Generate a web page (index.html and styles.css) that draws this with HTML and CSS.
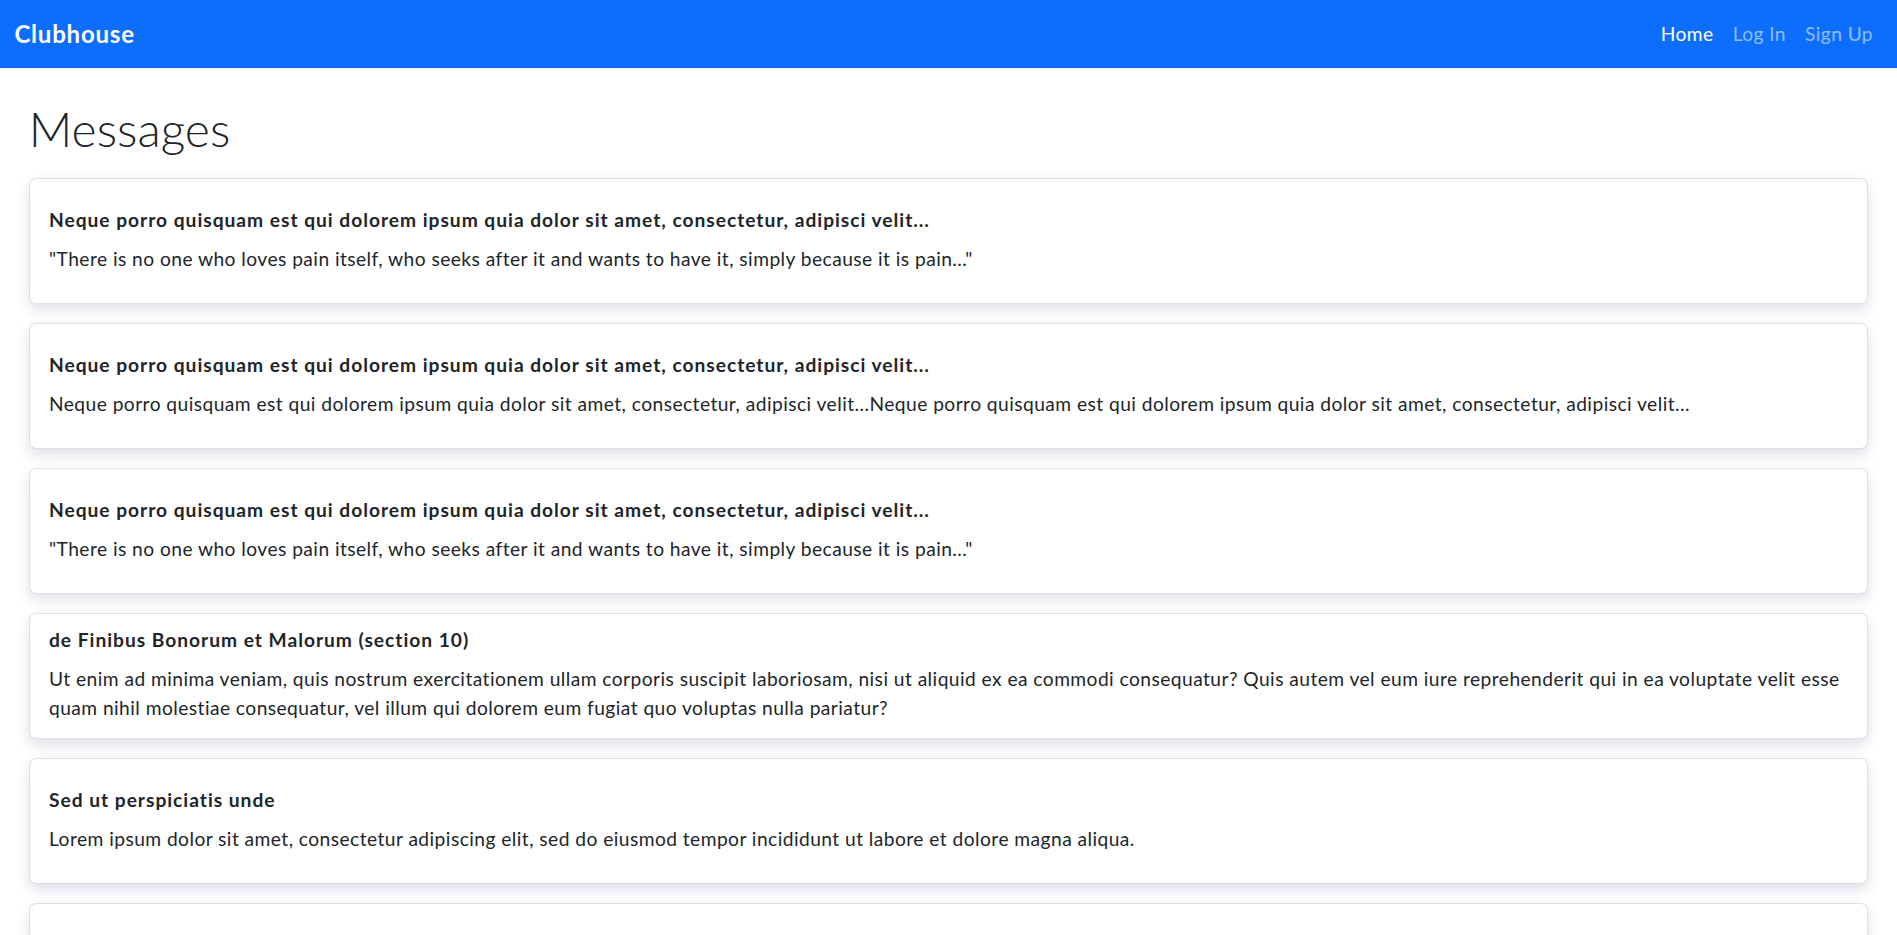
FILE: index.html
```html
<!DOCTYPE html>
<html lang="en">
<head>
<meta charset="utf-8">
<title>Clubhouse</title>
<link rel="stylesheet" href="styles.css">
</head>
<body>
<nav class="navbar">
  <a class="brand" href="#">Clubhouse</a>
  <ul class="nav">
    <li><a class="nav-link active" href="#">Home</a></li>
    <li><a class="nav-link" href="#">Log In</a></li>
    <li><a class="nav-link" href="#">Sign Up</a></li>
  </ul>
</nav>
<main class="container">
  <h1 class="page-title">Messages</h1>
  <div class="card">
    <h6 class="card-title">Neque porro quisquam est qui dolorem ipsum quia dolor sit amet, consectetur, adipisci velit...</h6>
    <p class="card-text">"There is no one who loves pain itself, who seeks after it and wants to have it, simply because it is pain..."</p>
  </div>
  <div class="card">
    <h6 class="card-title">Neque porro quisquam est qui dolorem ipsum quia dolor sit amet, consectetur, adipisci velit...</h6>
    <p class="card-text">Neque porro quisquam est qui dolorem ipsum quia dolor sit amet, consectetur, adipisci velit...Neque porro quisquam est qui dolorem ipsum quia dolor sit amet, consectetur, adipisci velit...</p>
  </div>
  <div class="card">
    <h6 class="card-title">Neque porro quisquam est qui dolorem ipsum quia dolor sit amet, consectetur, adipisci velit...</h6>
    <p class="card-text">"There is no one who loves pain itself, who seeks after it and wants to have it, simply because it is pain..."</p>
  </div>
  <div class="card">
    <h6 class="card-title">de Finibus Bonorum et Malorum (section 10)</h6>
    <p class="card-text">Ut enim ad minima veniam, quis nostrum exercitationem ullam corporis suscipit laboriosam, nisi ut aliquid ex ea commodi consequatur? Quis autem vel eum iure reprehenderit qui in ea voluptate velit esse quam nihil molestiae consequatur, vel illum qui dolorem eum fugiat quo voluptas nulla pariatur?</p>
  </div>
  <div class="card">
    <h6 class="card-title">Sed ut perspiciatis unde</h6>
    <p class="card-text">Lorem ipsum dolor sit amet, consectetur adipiscing elit, sed do eiusmod tempor incididunt ut labore et dolore magna aliqua.</p>
  </div>
  <div class="card">
    <h6 class="card-title">Sed ut perspiciatis unde</h6>
    <p class="card-text">Lorem ipsum dolor sit amet, consectetur adipiscing elit, sed do eiusmod tempor incididunt ut labore et dolore magna aliqua.</p>
  </div>
</main>
</body>
</html>
```
FILE: styles.css
```css
* { box-sizing: border-box; }
html, body {
  margin: 0;
  padding: 0;
}
body {
  font-family: Lato, "Open Sans", "Liberation Sans", sans-serif;
  font-size: 19.2px;
  line-height: 1.5;
  color: #212529;
  background: #fff;
}
.navbar {
  height: 68px;
  background: #0d6efd;
  display: flex;
  align-items: center;
  justify-content: space-between;
  padding: 0 14.4px;
}
.brand {
  color: #fff;
  text-decoration: none;
  font-size: 24px;
  font-weight: 700;
  line-height: 1;
  letter-spacing: 0.8px;
}
.nav {
  list-style: none;
  margin: 0;
  padding: 0;
  display: flex;
}
.nav-link {
  display: block;
  padding: 9.6px;
  color: rgba(255, 255, 255, 0.55);
  text-decoration: none;
  font-size: 19.2px;
  line-height: 1.5;
  letter-spacing: 0.4px;
}
.nav-link.active { color: #fff; }
.container {
  padding: 32px 28.8px 0;
}
.page-title {
  margin: 0 0 20px;
  font-size: 48px;
  font-weight: 300;
  line-height: 1.2;
}
.card {
  height: 126px;
  margin-bottom: 19px;
  border: 1px solid rgba(0, 0, 0, 0.12);
  border-radius: 7px;
  background: #fff;
  box-shadow: 0 6px 14px rgba(30, 40, 90, 0.14);
  display: flex;
  flex-direction: column;
  justify-content: center;
  padding: 0 19.2px;
}
.card-title {
  margin: 0 0 14px;
  font-size: 19.2px;
  font-weight: 700;
  line-height: 1.2;
  letter-spacing: 0.98px;
}
.card-text {
  margin: 0;
  line-height: 28.8px;
  letter-spacing: 0.45px;
}
```
